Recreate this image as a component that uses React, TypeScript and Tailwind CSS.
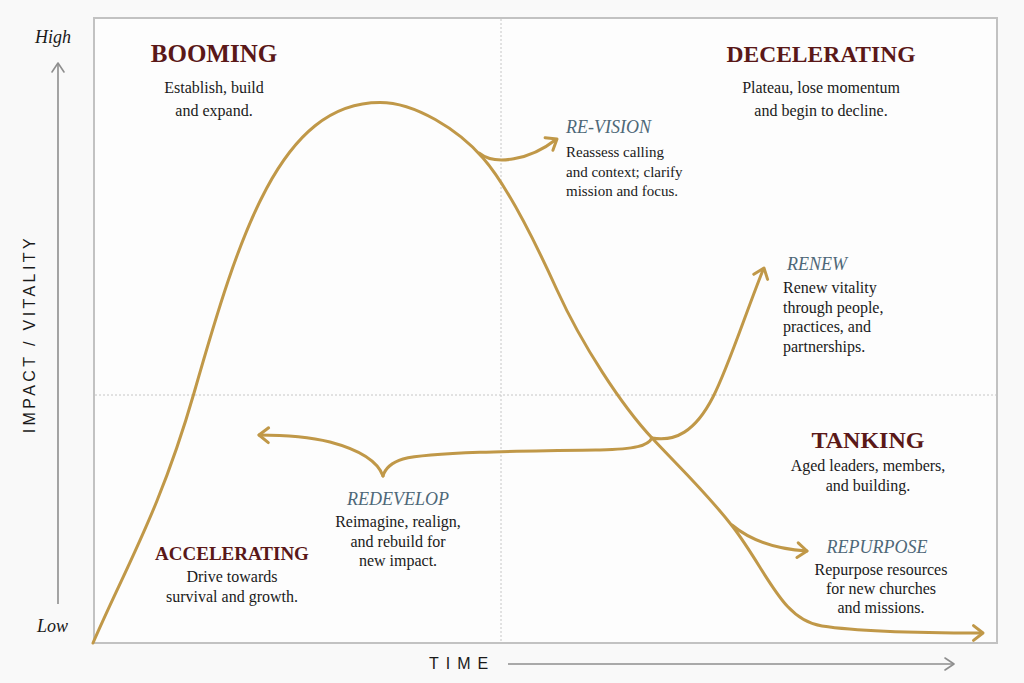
import React from "react";

type P = [number, number];

function head(tip: P, from: P, len = 12, ang = 38): string {
  const dx = tip[0] - from[0];
  const dy = tip[1] - from[1];
  const m = Math.hypot(dx, dy);
  const ux = dx / m;
  const uy = dy / m;
  const a = (ang * Math.PI) / 180;
  const rot = (c: number, s: number): P => [
    tip[0] - len * (ux * c - uy * s),
    tip[1] - len * (uy * c + ux * s),
  ];
  const l = rot(Math.cos(a), Math.sin(a));
  const r = rot(Math.cos(a), -Math.sin(a));
  return `M${l[0].toFixed(1)},${l[1].toFixed(1)} L${tip[0]},${tip[1]} L${r[0].toFixed(1)},${r[1].toFixed(1)}`;
}

const mainPath =
  "M93,643 C126,567 161,508 194,393 C239,235.5 280,102.5 380,102.5 C415,102.5 458,129.5 483,158 " +
  "C508,186.5 537,246 557,290 C582,345 622,406 652,438 C679,467 706,492 733,527 " +
  "C768,573 782,620 822,626 C862,632 930,633 981,633";
const revisionPath = "M479,153 C495,166 530,160 556,139.5";
const renewPath = "M652,438 C675,442 695,432 713,397 C728,368 745,315 763,270";
const redevRightPath = "M652,438 C648,446 635,449 600,450 C520,451 430,452 403,459 C390,463 385,469 383,476";
const redevLeftPath = "M383,476 C378,462 360,450 330,442 C310,437 285,435 259,435";
const repurposePath = "M732,525 C750,540 775,549 807,551";

const serif = "font-['Liberation_Serif','Times_New_Roman',serif]";
const sans = "font-['Liberation_Sans',Arial,sans-serif]";

export default function App() {
  const gold = "#c09848";
  return (
    <div className={`w-[1024px] h-[683px] bg-[#f9f9f9] pt-[17px] flex flex-col overflow-hidden ${serif}`}>
      <div className="flex h-[627px]">
        {/* Y axis column */}
        <div className="w-[93px] flex flex-col">
          <div className="mt-[10px] h-[20px] leading-[20px] pl-[35px] italic text-[18px] text-[#1a1a1a]">High</div>
          <div className="flex-1 flex">
            <div className="ml-[20px] w-[20px] flex items-center justify-center pt-[5px]">
              <span className={`${sans} text-[16px] leading-[20px] tracking-[3.4px] text-[#1a1a1a] [writing-mode:vertical-rl] rotate-180 whitespace-nowrap`}>
                IMPACT / VITALITY
              </span>
            </div>
            <svg className="ml-[8px]" width="20" height="569" viewBox="0 0 20 569">
              <line x1="10" y1="17" x2="10" y2="557" stroke="#8e8e8e" strokeWidth="1.6" />
              <path d="M4,25 L10,16 L16,25" fill="none" stroke="#8e8e8e" strokeWidth="1.6" strokeLinecap="round" strokeLinejoin="round" />
            </svg>
          </div>
          <div className="h-[20px] leading-[20px] pl-[37px] italic text-[18px] text-[#1a1a1a] mb-[8px]">Low</div>
        </div>

        {/* Chart box */}
        <div className="relative w-[905px] h-[627px] border-2 border-[#c2c2c2] bg-[#fdfdfd]">
          <svg className="absolute inset-0 overflow-visible" width="901" height="623" viewBox="95 19 901 623">
            <line x1="501" y1="19" x2="501" y2="642" stroke="#c6c6c6" strokeWidth="1" strokeDasharray="2 2" />
            <line x1="95" y1="395" x2="996" y2="395" stroke="#c6c6c6" strokeWidth="1" strokeDasharray="2 2" />
            <g fill="none" stroke={gold} strokeWidth="3" strokeLinecap="round" strokeLinejoin="round">
              <path d={mainPath} />
              <path d={head([983, 633], [960, 633])} />
              <path d={revisionPath} />
              <path d={head([557, 139], [541, 149])} />
              <path d={renewPath} />
              <path d={head([764, 268], [758, 284])} />
              <path d={redevRightPath} />
              <path d={redevLeftPath} />
              <path d={head([259, 435], [280, 435.5])} />
              <path d={repurposePath} />
              <path d={head([807, 551], [790, 549.5])} />
            </g>
          </svg>

          {/* BOOMING */}
          <div className="absolute left-[19px] top-[20px] w-[200px] flex flex-col items-center text-center">
            <div className="text-[25px] leading-[30px] font-bold text-[#5a1818]">BOOMING</div>
            <div className="mt-[7px] text-[16px] leading-[23px] text-[#1a1a1a]">
              Establish, build<br />and expand.
            </div>
          </div>

          {/* DECELERATING */}
          <div className="absolute left-[606px] top-[20px] w-[240px] flex flex-col items-center text-center">
            <div className="text-[23.5px] leading-[30px] font-bold text-[#5a1818]">DECELERATING</div>
            <div className="mt-[7px] text-[16px] leading-[23px] text-[#1a1a1a]">
              Plateau, lose momentum<br />and begin to decline.
            </div>
          </div>

          {/* RE-VISION */}
          <div className="absolute left-[471px] top-[97px] flex flex-col">
            <div className="text-[18px] leading-[22px] italic text-[#4e6878]">RE-VISION</div>
            <div className="mt-[5px] text-[15px] leading-[19.5px] text-[#1a1a1a]">
              Reassess calling<br />and context; clarify<br />mission and focus.
            </div>
          </div>

          {/* RENEW */}
          <div className="absolute left-[688px] top-[234px] flex flex-col">
            <div className="pl-[4px] text-[18px] leading-[22px] italic text-[#4e6878]">RENEW</div>
            <div className="mt-[3px] text-[16px] leading-[19.5px] text-[#1a1a1a]">
              Renew vitality<br />through people,<br />practices, and<br />partnerships.
            </div>
          </div>

          {/* TANKING */}
          <div className="absolute left-[663px] top-[408px] w-[220px] flex flex-col items-center text-center">
            <div className="text-[24px] leading-[27px] font-bold text-[#5a1818]">TANKING</div>
            <div className="mt-[2px] text-[16px] leading-[20px] text-[#1a1a1a]">
              Aged leaders, members,<br />and building.
            </div>
          </div>

          {/* REDEVELOP */}
          <div className="absolute left-[203px] top-[469px] w-[200px] flex flex-col items-center text-center">
            <div className="text-[18px] leading-[22px] italic text-[#4e6878]">REDEVELOP</div>
            <div className="mt-[2px] text-[16px] leading-[19.5px] text-[#1a1a1a]">
              Reimagine, realign,<br />and rebuild for<br />new impact.
            </div>
          </div>

          {/* ACCELERATING */}
          <div className="absolute left-[37px] top-[524px] w-[200px] flex flex-col items-center text-center">
            <div className="text-[19px] leading-[22px] font-bold text-[#5a1818]">ACCELERATING</div>
            <div className="mt-[2px] text-[16px] leading-[19.5px] text-[#1a1a1a]">
              Drive towards<br />survival and growth.
            </div>
          </div>

          {/* REPURPOSE */}
          <div className="absolute left-[676px] top-[517px] w-[220px] flex flex-col items-center text-center">
            <div className="pr-[8px] text-[18px] leading-[22px] italic text-[#4e6878]">REPURPOSE</div>
            <div className="mt-[2px] text-[16px] leading-[19.2px] text-[#1a1a1a]">
              Repurpose resources<br />for new churches<br />and missions.
            </div>
          </div>
        </div>
      </div>

      {/* X axis */}
      <div className="h-[39px] flex items-center pl-[429px]">
        <span className={`${sans} text-[16px] tracking-[7px] text-[#1a1a1a] leading-[20px]`}>TIME</span>
        <svg className="ml-[13px]" width="452" height="20" viewBox="0 0 452 20">
          <line x1="0" y1="10" x2="445" y2="10" stroke="#8e8e8e" strokeWidth="1.6" />
          <path d="M437,4 L446,10 L437,16" fill="none" stroke="#8e8e8e" strokeWidth="1.6" strokeLinecap="round" strokeLinejoin="round" />
        </svg>
      </div>
    </div>
  );
}
